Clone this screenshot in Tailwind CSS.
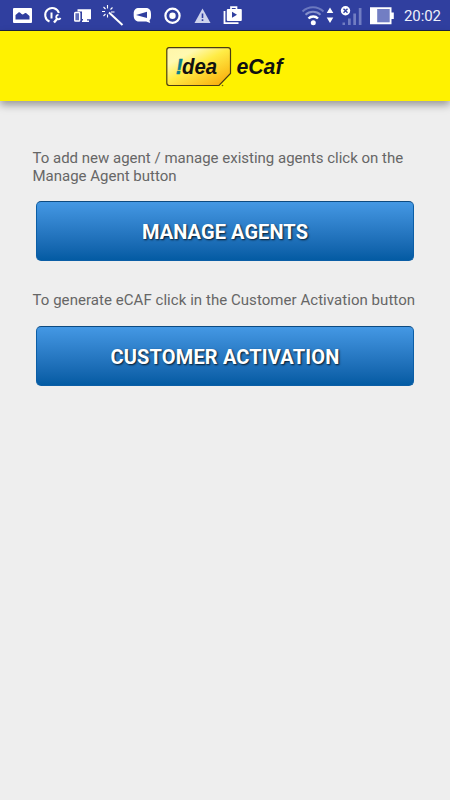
<!DOCTYPE html>
<html lang="en">
<head>
    <meta charset="UTF-8">
    <meta name="viewport" content="width=device-width, initial-scale=1.0">
    <title>Idea eCaf</title>
    <script src="https://cdn.jsdelivr.net/npm/@tailwindcss/browser@4"></script>
</head>
<body class="bg-[#eeeeee] min-h-screen font-['Roboto',sans-serif]">
    <!-- Status bar -->
    <div class="h-[31px] bg-[#303f9f] border-b border-[#1c2340] pl-[7px] pr-2.5 flex items-center justify-between text-white">
        <div class="flex">
            <!-- picture -->
            <svg class="w-[30px] h-[30px]" viewBox="0 0 30 30">
                <rect x="6" y="8" width="19" height="15" rx="1" fill="#fff"/>
                <path d="M8.500 19.500v-4.500l3-2.500c1.500-1 2.500 2 4 2s2-2 3.500-1.500l3.500 3v3.500z" fill="#303f9f"/>
            </svg>
            <!-- gauge with wrench -->
            <svg class="w-[30px] h-[30px]" viewBox="0 0 30 30" fill="none" stroke="#fff">
                <path d="M12.500 21.500A7 7 0 1 1 21.900 13" stroke-width="2"/>
                <path d="M14.500 12.500v6" stroke-width="2"/>
                <path d="M17 22.500l3.500-4" stroke-width="2.400"/>
                <path d="M21.500 14.800a2.200 2.200 0 1 0 2 3" stroke-width="1.800"/>
            </svg>
            <!-- phone and monitor -->
            <svg class="w-[30px] h-[30px]" viewBox="0 0 30 30">
                <path d="M10.500 9.300H24v10h-4v1.200h2V22h-7v-1.500h1V19h-1v-7.500h-4.500z" fill="#fff"/>
                <rect x="7.700" y="12.500" width="5" height="8.500" rx="0.800" fill="#5f6db9" stroke="#fff" stroke-width="1.400"/>
            </svg>
            <!-- magic wand -->
            <svg class="w-[30px] h-[30px]" viewBox="0 0 30 30" fill="none" stroke="#fff">
                <path d="M12 12.500L25.500 25" stroke-width="2"/>
                <path d="M10.500 5v3.500M6.500 7l2 2M5 11.500h3M6.500 16l2-2M10.500 14.500v3M13.500 9.500l2-2M14 12h3.500" stroke-width="1.100"/>
            </svg>
            <!-- chat bubble -->
            <svg class="w-[30px] h-[30px]" viewBox="0 0 30 30">
                <path d="M12 8h7c3.500 0 5 2.500 5 6v2c0 2.500-.5 3.500-1.500 4.200L23.200 23l-4-1.500H12c-3.500 0-5.300-2.500-5.300-6v-2C6.700 10 8.500 8 12 8z" fill="#fff"/>
                <path d="M9 15l11-3.200v6.200z" fill="#303f9f"/>
            </svg>
            <!-- record -->
            <svg class="w-[30px] h-[30px]" viewBox="0 0 30 30">
                <circle cx="15.500" cy="15.700" r="7.100" fill="none" stroke="#fff" stroke-width="2.200"/>
                <circle cx="15.500" cy="15.700" r="3.200" fill="#fff"/>
            </svg>
            <!-- warning -->
            <svg class="w-[30px] h-[30px]" viewBox="0 0 30 30">
                <path d="M15.500 8.500L23.500 23h-16z" fill="#cdd2ec"/>
                <path d="M15.500 13.500v4.500M15.500 19.300v1.800" stroke="#303f9f" stroke-width="1.600"/>
            </svg>
            <!-- store bag -->
            <svg class="w-[30px] h-[30px]" viewBox="0 0 30 30">
                <path d="M7.500 11v12.200H21.500" fill="none" stroke="#fff" stroke-width="1.800"/>
                <path d="M14 9.500V7.200h5.500v2.300" fill="none" stroke="#fff" stroke-width="1.700"/>
                <rect x="9.800" y="9" width="15" height="12" rx="1" fill="#fff"/>
                <path d="M15 11.800v6l5-3z" fill="#303f9f"/>
            </svg>
        </div>
        <div class="flex items-center">
            <!-- wifi -->
            <svg class="w-[25px] h-[30px]" viewBox="0 0 25 30" fill="none" stroke="#fff" stroke-width="2">
                <path d="M1.500 11.500a15 15 0 0 1 21 0" stroke="#6b78bf"/>
                <path d="M4.500 14.800a11 11 0 0 1 15 0" stroke="#8590cb"/>
                <path d="M7.500 18.500a6.500 6.500 0 0 1 9.500 0" stroke-width="2.400"/>
                <circle cx="12.300" cy="22.700" r="2.500" fill="#fff" stroke="none"/>
            </svg>
            <svg class="w-[8px] h-[30px]" viewBox="0 0 8 30" fill="#fff">
                <path d="M4 7.500l3.300 5.500H.7zM4 23l3.300-5.500H.7z"/>
            </svg>
            <!-- signal, no SIM -->
            <svg class="w-[24px] h-[30px] ml-[5px]" viewBox="0 0 24 30">
                <path d="M3.500 22.500h2.500v2.500h-2.500zM9 18.500h2.700v6.500h-2.700zM14.300 13.500h2.700v11.500h-2.700zM19.800 8h2.700v17h-2.700z" fill="#717dc2"/>
                <circle cx="6.500" cy="10.700" r="4.700" fill="#fff"/>
                <path d="M4.500 8.700l4 4M8.500 8.700l-4 4" stroke="#303f9f" stroke-width="1.400"/>
            </svg>
            <!-- battery -->
            <svg class="w-[25px] h-[30px] ml-[7px]" viewBox="0 0 25 30">
                <path d="M0 7.300h21.500v5.200h2.300v6.500H21.500v5.300H0z" fill="#fff"/>
                <rect x="7.200" y="9" width="12.500" height="13.300" fill="#727ec3"/>
            </svg>
            <span class="ml-[9px] w-[36px] text-[15px] leading-[30px] tracking-[-0.1px] text-[#eef0fa] whitespace-nowrap pt-px">20:02</span>
        </div>
    </div>

    <!-- App bar -->
    <header class="h-[70px] bg-[#fff200] pl-[166px] pt-[15px] flex items-start shadow-[0_4px_8px_rgba(0,0,0,0.36)]">
        <svg class="w-[120px] h-[44px] font-['Liberation_Sans',sans-serif] font-bold italic" viewBox="0 0 120 44">
            <defs>
                <linearGradient id="tag" x1="0" y1="0" x2="0.900" y2="1">
                    <stop offset="0" stop-color="#fff6a8"/>
                    <stop offset="0.250" stop-color="#fff9b0"/>
                    <stop offset="0.500" stop-color="#ffec45"/>
                    <stop offset="0.800" stop-color="#fcc520"/>
                    <stop offset="1" stop-color="#f7a80c"/>
                </linearGradient>
            </defs>
            <path d="M3 1.700h59a2.500 2.500 0 0 1 2.500 2.500V27.500L53 39.500H3A2.500 2.500 0 0 1 .8 37V4.200A2.500 2.500 0 0 1 3 1.700z" fill="url(#tag)" stroke="#4a3c12" stroke-width="1.200"/>
            <text x="9.800" y="28" font-size="21.500" fill="#087f8e" stroke="#087f8e" stroke-width="0.400" textLength="7" lengthAdjust="spacingAndGlyphs">!</text>
            <text x="16" y="28" font-size="21.500" fill="#111" textLength="35" lengthAdjust="spacingAndGlyphs">dea</text>
            <text x="70.500" y="28" font-size="21.500" fill="#111" textLength="46" lengthAdjust="spacingAndGlyphs">eCaf</text>
            <circle cx="56.500" cy="39.500" r="0.800" fill="#6b5a14"/>
        </svg>
    </header>

    <main class="pl-[32.5px] pt-[49px] text-[15px] leading-[17.500px] text-[#666666]">
        <p class="w-[384px]">To add new agent / manage existing agents click on the Manage Agent button</p>
        <button class="block w-[378px] h-[60px] mt-[16px] ml-[3.5px] pt-[3px] rounded-[5px] border border-[#0b5ea6] border-t-[#0d4a80] bg-linear-to-b from-[#4498e4] to-[#035ba3] text-white text-[20px] tracking-[0.08px] font-bold text-shadow-[1px_1px_2px_rgba(0,0,0,0.8)]">MANAGE AGENTS</button>
        <p class="mt-[31px] whitespace-nowrap tracking-[0.05px]">To generate eCAF click in the Customer Activation button</p>
        <button class="block w-[378px] h-[60px] mt-[16.5px] ml-[3.5px] pt-[3px] rounded-[5px] border border-[#0b5ea6] border-t-[#0d4a80] bg-linear-to-b from-[#4498e4] to-[#035ba3] text-white text-[20px] tracking-[0.15px] font-bold text-shadow-[1px_1px_2px_rgba(0,0,0,0.8)]">CUSTOMER ACTIVATION</button>
    </main>
</body>
</html>
